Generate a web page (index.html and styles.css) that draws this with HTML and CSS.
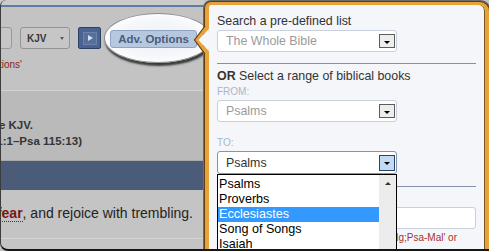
FILE: index.html
```html
<!DOCTYPE html>
<html>
<head>
<meta charset="utf-8">
<link rel="stylesheet" href="styles.css">
</head>
<body>
<div class="screen">
  <div class="page">
    <div class="topstrip"></div>
    <div class="blueline"></div>
    <div class="toolbar">
      <div class="spotlight"></div>
      <div class="field"></div>
      <div class="ver"><span>KJV</span><span class="caret"></span></div>
      <div class="go"><span class="go-inner"><span class="play"></span></span></div>
      <div class="adv">Adv. Options</div>
    </div>
    <div class="note"><span>Narrow your search with 'Adv. Options'</span></div>
    <div class="results">
      <div class="rline"><span>Found 150 verses in the KJV.</span></div>
      <div class="rline2"><span>(Psa 1:1–Psa 115:13)</span></div>
    </div>
    <div class="band"></div>
    <div class="verse">
      <div class="vline"><span>Serve the LORD with <b class="hit">fear</b>, and rejoice with trembling.</span></div>
    </div>
    <div class="rest"></div>
  </div>

  <div class="panel">
    <svg class="pointer" width="23" height="32" viewBox="0 0 23 32">
      <polygon points="18,5.5 8.5,16 18,26.5 23,26.5 23,5.5" fill="#f4f6fa"/>
      <polygon points="15,2 4.5,16 15,30 18,30 18,26.5 8.5,16 18,5.5 18,2" fill="#e8a23a"/>
      <polyline points="15,2 4.5,16 15,30" fill="none" stroke="#5e3f12" stroke-width="1.2"/>
    </svg>
    <div class="label">Search a pre-defined list</div>
    <div class="select"><span>The Whole Bible</span><span class="btn"><span class="tri"></span></span></div>
    <div class="rule"></div>
    <div class="label2"><b>OR</b> Select a range of biblical books</div>
    <div class="small">FROM:</div>
    <div class="select s2"><span>Psalms</span><span class="btn"><span class="tri"></span></span></div>
    <div class="small to">TO:</div>
    <div class="combo">
      <div class="select active"><span>Psalms</span><span class="btn on"><span class="tri"></span></span></div>
      <div class="list">
        <div class="items">
          <div>Psalms</div>
          <div>Proverbs</div>
          <div class="sel">Ecclesiastes</div>
          <div>Song of Songs</div>
          <div>Isaiah</div>
          <div>Jeremiah</div>
        </div>
        <div class="scroll"><span class="up"></span></div>
      </div>
    </div>
    <div class="rule rule2"></div>
    <div class="textbox"></div>
    <div class="hint"><span>e.g. 'Gen-Jdg;Psa-Mal' or</span></div>
  </div>

  <div class="frame"></div>
</div>
</body>
</html>
```

FILE: styles.css
```css
html, body {
  margin: 0;
  padding: 0;
}

.screen {
  position: relative;
  width: 489px;
  height: 251px;
  overflow: hidden;
  background: #c3c3c3;
  font-family: "Liberation Sans", Arial, sans-serif;
}

/* ---------- greyed-out page on the left ---------- */
.page {
  width: 204px;
  height: 251px;
  display: flex;
  flex-direction: column;
  overflow: hidden;
  background: #c3c3c3;
}

.topstrip {
  flex: none;
  height: 5px;
  background: #cbcbcb;
}

.blueline {
  flex: none;
  height: 2px;
  background: #5d7da4;
}

.toolbar {
  flex: none;
  position: relative;
  margin-top: 20px;
  height: 22px;
  display: flex;
  gap: 8px;
}

.spotlight {
  position: absolute;
  left: 104px;
  top: -14px;
  width: 108px;
  height: 50px;
  box-sizing: border-box;
  border-radius: 50%;
  border: 1px solid #8e8e8e;
  background: radial-gradient(ellipse at 50% 50%, #edf1f7 0%, #f4f6fa 50%, #ffffff 80%, #d6d6d6 100%);
  box-shadow: 1px 3px 2px rgba(0, 0, 0, 0.7);
}

.field {
  margin-left: -48px;
  width: 60px;
  height: 22px;
  box-sizing: border-box;
  border: 1px solid #9a9a9a;
  border-radius: 3px;
  background: #c6c6c6;
}

.ver {
  width: 50px;
  height: 22px;
  box-sizing: border-box;
  border: 1px solid #949494;
  border-radius: 3px;
  background: #c6c6c6;
  display: flex;
  align-items: center;
  justify-content: space-between;
  padding: 0 5px 0 6px;
  font-size: 10px;
  font-weight: bold;
  color: #383838;
}

.caret {
  width: 0;
  height: 0;
  border-left: 2.5px solid transparent;
  border-right: 2.5px solid transparent;
  border-top: 3px solid #5a5a5a;
}

.go {
  width: 23px;
  height: 22px;
  box-sizing: border-box;
  margin-right: 1px;
  border: 1px solid #2f4163;
  border-radius: 2px;
  background: #4b6390;
  display: flex;
  align-items: center;
  justify-content: center;
}

.go-inner {
  width: 14px;
  height: 13px;
  box-sizing: border-box;
  border: 1px solid #6b82ab;
  background: #55709c;
  display: flex;
  align-items: center;
  justify-content: center;
}

.play {
  width: 0;
  height: 0;
  margin-left: 2px;
  border-left: 5px solid #dadee7;
  border-top: 3.5px solid transparent;
  border-bottom: 3.5px solid transparent;
}

.adv {
  position: relative;
  z-index: 1;
  margin-top: 3px;
  width: 87px;
  height: 18px;
  box-sizing: border-box;
  border: 1px solid #8ea4c2;
  border-radius: 3px;
  background: #b6c8df;
  color: #4b5c7c;
  font-size: 11.5px;
  font-weight: bold;
  display: flex;
  align-items: center;
  justify-content: center;
  white-space: nowrap;
}

.note {
  flex: none;
  margin-top: 10px;
  width: 22px;
  display: flex;
  justify-content: flex-end;
  white-space: nowrap;
  font-size: 10px;
  line-height: 12px;
  color: #8b1d1d;
}

.results {
  flex: none;
  margin-top: 19px;
  height: 70px;
  box-sizing: border-box;
  border-top: 1px solid #d3d3d3;
  padding-top: 26px;
  background: #bababa;
  font-size: 11.5px;
  font-weight: bold;
  line-height: 16px;
  color: #353535;
}

.rline,
.rline2 {
  display: flex;
  justify-content: flex-end;
  white-space: nowrap;
}

.rline { width: 33px; }
.rline2 { width: 82px; }

.band {
  flex: none;
  height: 30px;
  box-sizing: border-box;
  border-top: 1px solid #a9a9a9;
  background: #4b5c79;
}

.verse {
  flex: none;
  height: 48px;
  box-sizing: border-box;
  padding-top: 15px;
  background: #c4c4c4;
}

.vline {
  width: 193px;
  display: flex;
  justify-content: flex-end;
  white-space: nowrap;
  font-size: 14px;
  line-height: 17px;
  color: #232323;
}

.hit {
  color: #7d1414;
  border-bottom: 1px dotted #8a1a1a;
}

.rest {
  flex: 1;
  border-top: 1px solid #d4d4d4;
  background: #c4c4c4;
}

/* ---------- advanced options popover ---------- */
.panel {
  position: absolute;
  left: 205px;
  top: 2px;
  width: 284px;
  height: 262px;
  box-sizing: border-box;
  border: 4px solid #e8a23a;
  border-top-width: 3px;
  border-radius: 6px 9px 0 0;
  background: #f4f6fa;
  box-shadow: 0 0 0 1px #5e3f12, 0 0 0 2px #6d6d6d, inset -1px 0 0 #7a5520;
  padding: 9px 9px 0 8px;
  display: flex;
  flex-direction: column;
  z-index: 2;
}

.pointer {
  position: absolute;
  left: -19px;
  top: 19px;
}

.label,
.label2 {
  font-size: 12.4px;
  line-height: 15px;
  color: #333;
  white-space: nowrap;
}

.label2 { margin-top: 5px; }

.select {
  flex: none;
  margin-top: 1px;
  width: 180px;
  height: 22px;
  box-sizing: border-box;
  border: 1px solid #c8d0dc;
  border-radius: 3px;
  background: #fff;
  display: flex;
  align-items: center;
  justify-content: space-between;
  padding: 0 1px 0 8px;
  font-size: 12.4px;
  color: #9b9b9b;
}

.s2 { margin-top: 2px; }

.btn {
  width: 16px;
  height: 14px;
  box-sizing: border-box;
  border: 1px solid #5c5c5c;
  background: #ededed;
  display: flex;
  align-items: center;
  justify-content: center;
  padding-top: 2px;
}

.tri {
  width: 0;
  height: 0;
  border-left: 3px solid transparent;
  border-right: 3px solid transparent;
  border-top: 3px solid #000;
}

.rule {
  flex: none;
  margin-top: 11px;
  height: 1px;
  background: #8391ab;
}

.rule2 { margin-top: 12px; }

.small {
  margin-top: 2px;
  font-size: 10px;
  line-height: 12px;
  color: #a9b6ca;
}

.small.to { margin-top: 15px; }

.combo {
  position: relative;
  margin-top: 2px;
  z-index: 3;
}

.select.active {
  margin-top: 0;
  height: 23px;
  border-color: #8194b3;
  color: #333;
}

.btn.on {
  height: 16px;
  background: #c3daf3;
  border-color: #26446b;
}

.list {
  position: absolute;
  left: 0;
  top: 100%;
  width: 180px;
  height: 92px;
  box-sizing: border-box;
  border: 1px solid #000;
  background: #fff;
  display: flex;
}

.items {
  flex: 1;
  padding-top: 2px;
  font-size: 12.6px;
  line-height: 15px;
  color: #000;
  white-space: nowrap;
}

.items div { padding-left: 1px; }

.items .sel {
  background: #3399ff;
  color: #fff;
}

.scroll {
  width: 17px;
  background: #ececec;
  display: flex;
  justify-content: center;
  align-items: flex-start;
}

.up {
  margin-top: 7px;
  width: 0;
  height: 0;
  border-left: 3.5px solid transparent;
  border-right: 3.5px solid transparent;
  border-bottom: 3.5px solid #333;
}

.textbox {
  flex: none;
  margin-top: 20px;
  height: 22px;
  box-sizing: border-box;
  border: 1px solid #c8d0dc;
  border-radius: 3px;
  background: #fff;
}

.hint {
  margin-top: 3px;
  display: flex;
  justify-content: flex-end;
  padding-right: 19px;
  font-size: 10px;
  line-height: 12px;
  color: #a8302a;
  white-space: nowrap;
}

/* ---------- screenshot frame ---------- */
.frame {
  position: absolute;
  left: 0;
  top: 0;
  right: 0;
  bottom: 0;
  border-left: 1px solid #3c3c3c;
  border-bottom: 2px solid #161616;
  border-radius: 6px 0 0 8px;
  pointer-events: none;
  z-index: 5;
}
```
